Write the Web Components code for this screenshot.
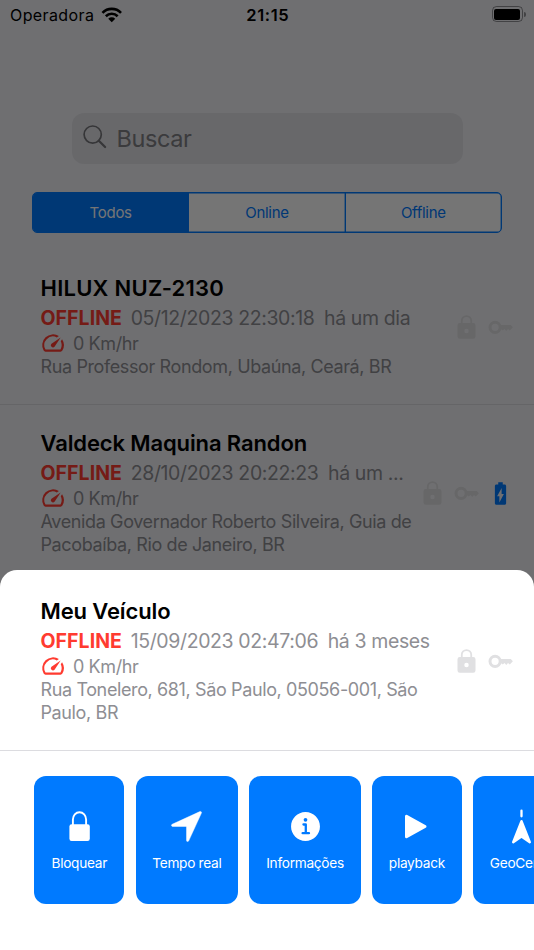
<!DOCTYPE html>
<html lang="pt-BR">
<head>
<meta charset="utf-8">
<meta name="viewport" content="width=device-width, initial-scale=1">
<title>Veículos</title>
<style>
  :root {
    --blue: #007aff;
    --red: #ff3b30;
    --gray: #8e8e93;
    --page: #f2f2f7;
  }

  body {
    margin: 0;
    overflow: hidden;
    font-family: Inter, "Liberation Sans", sans-serif;
    color: #000;
  }
</style>
</head>
<body>
<tracker-app>
  <status-bar carrier="Operadora" time="21:15"></status-bar>
  <search-field placeholder="Buscar"></search-field>
  <segmented-control>
    <segment-item selected>Todos</segment-item>
    <segment-item>Online</segment-item>
    <segment-item>Offline</segment-item>
  </segmented-control>
  <vehicle-row name="HILUX NUZ-2130" status="OFFLINE" date="05/12/2023 22:30:18" ago="há um dia" speed="0 Km/hr" icons="lock key" style="--name-tracking: 0.25px">
    <span>Rua Professor Rondom, Ubaúna, Ceará, BR</span>
  </vehicle-row>
  <vehicle-row name="Valdeck Maquina Randon" status="OFFLINE" date="28/10/2023 20:22:23" ago="há um ..." speed="0 Km/hr" icons="lock key battery">
    <span>Avenida Governador Roberto Silveira, Guia de<br>Pacobaíba, Rio de Janeiro, BR</span>
  </vehicle-row>

  <action-sheet slot="sheet">
    <vehicle-row slot="header" name="Meu Veículo" status="OFFLINE" date="15/09/2023 02:47:06" ago="há 3 meses" speed="0 Km/hr" icons="lock key">
      <span>Rua Tonelero, 681, São Paulo, 05056-001, São<br>Paulo, BR</span>
    </vehicle-row>
    <action-tile icon="padlock" style="width: 90px">Bloquear</action-tile>
    <action-tile icon="navigate" style="width: 102.7px">Tempo real</action-tile>
    <action-tile icon="info" style="width: 111.3px">Informações</action-tile>
    <action-tile icon="play" style="width: 90px">playback</action-tile>
    <action-tile icon="fence" style="width: 96px">GeoCerca</action-tile>
  </action-sheet>
</tracker-app>

<script>
const ICONS = {
  lock: {
    box: '0 0 24 24',
    body: '<path d="M12 17a2 2 0 0 0 2-2 2 2 0 0 0-4 0 2 2 0 0 0 2 2M18 8a2 2 0 0 1 2 2v10a2 2 0 0 1-2 2H6a2 2 0 0 1-2-2V10a2 2 0 0 1 2-2h1V6a5 5 0 0 1 10 0v2h1M12 2.6A3.4 3.4 0 0 0 8.6 6v2h6.8V6A3.4 3.4 0 0 0 12 2.6Z"/>',
  },
  key: {
    box: '0 0 27 27',
    body: '<circle cx="8.1" cy="13.3" r="5.1" fill="none" stroke="currentColor" stroke-width="3"/><path d="M13 11h10.8l2.1 2.3-3.1 3.1-1.8-1.4-1.7 1.9-1.8-1.9-1.7 1.5-1-1H13Z"/>',
  },
  battery: {
    box: '0 0 24 24',
    body: '<path d="M15.67 4H14V2h-4v2H8.33C7.6 4 7 4.6 7 5.33v15.33C7 21.4 7.6 22 8.33 22h7.33c.74 0 1.34-.6 1.34-1.33V5.33C17 4.6 16.4 4 15.67 4zM11 20v-5.5H9L13 7v5.5h2L11 20z"/>',
  },
  gauge: {
    box: '0 0 24 24',
    body: '<path d="m20.38 8.57-1.23 1.85a8 8 0 0 1-.22 7.58H5.07A8 8 0 0 1 15.58 6.85l1.85-1.23A10 10 0 0 0 3.35 19a2 2 0 0 0 1.72 1h13.85a2 2 0 0 0 1.74-1 10 10 0 0 0-.27-10.44zM10.59 15.41a2 2 0 0 0 2.83 0l5.66-8.49-8.49 5.66a2 2 0 0 0 0 2.83z"/>',
  },
  search: {
    box: '0 0 24 24',
    body: '<g fill="none" stroke="currentColor"><circle cx="9.7" cy="9.6" r="8.6" stroke-width="1.7"/><path d="m15.8 15.8 6.3 6.2" stroke-width="2.3" stroke-linecap="round"/></g>',
  },
  wifi: {
    box: '0 0 22 16',
    body: '<g fill="none" stroke="currentColor" stroke-width="2.7"><path d="M1.4 6a13.5 13.5 0 0 1 19.2 0"/><path d="M4.9 9.5a8.6 8.6 0 0 1 12.2 0"/></g><path d="m7.4 12.1a5.2 5.2 0 0 1 7.2 0L11 15.7Z"/>',
  },
  padlock: {
    box: '0 0 37 37',
    body: '<rect x="8.4" y="16.3" width="20.4" height="16.7" rx="2.2"/><path d="M11.9 17v-5.4a6.6 7.4 0 0 1 13.2 0V17" fill="none" stroke="currentColor" stroke-width="1.9"/>',
  },
  navigate: {
    box: '0 0 512 512',
    body: '<path d="M272 464a16 16 0 0 1-16-16.42V264.13a8 8 0 0 0-8-8H64.41a16.31 16.31 0 0 1-15.49-10.65 16 16 0 0 1 8.41-19.87l384-176.15a16 16 0 0 1 21.22 21.19l-176 384A16 16 0 0 1 272 464z" stroke="currentColor" stroke-width="6"/>',
  },
  info: {
    box: '0 0 512 512',
    body: '<path d="M256 56C145.72 56 56 145.72 56 256s89.72 200 200 200 200-89.72 200-200S366.28 56 256 56zm0 82a26 26 0 1 1-26 26 26 26 0 0 1 26-26zm48 226h-88a16 16 0 0 1 0-32h28v-88h-16a16 16 0 0 1 0-32h32a16 16 0 0 1 16 16v104h28a16 16 0 0 1 0 32z"/>',
  },
  play: {
    box: '0 0 37 37',
    body: '<path d="M8.5 8.2v20.6L27 18.5Z" stroke="currentColor" stroke-width="3" stroke-linejoin="round"/>',
  },
  fence: {
    box: '0 0 37 37',
    body: '<path d="M18.5 2.7v5.6" fill="none" stroke="currentColor" stroke-width="2.3" stroke-linecap="round"/><path d="m18.5 13.2 8.3 21-8.3-5.6-8.3 5.6Z" stroke="currentColor" stroke-width="2.4" stroke-linejoin="round"/>',
  },
}

const attach = (element, html) => {
  const root = element.attachShadow({ mode: 'open' })
  root.innerHTML = html
  return root
}

class UiIcon extends HTMLElement {
  connectedCallback() {
    if (this.shadowRoot) {
      return
    }

    const icon = ICONS[this.getAttribute('name')]
    attach(this, `
      <style>
        :host { display: block; flex: none; width: 27px; height: 27px; }
        svg { display: block; width: 100%; height: 100%; overflow: visible; fill: currentColor; }
      </style>
      <svg viewBox="${icon.box}" aria-hidden="true">${icon.body}</svg>
    `)
  }
}

class TrackerApp extends HTMLElement {
  constructor() {
    super()
    attach(this, `
      <style>
        :host {
          display: block;
          position: relative;
          width: 534px;
          height: 950px;
          overflow: hidden;
          background: var(--page);
        }

        .content { display: flex; flex-direction: column; }

        .dim {
          position: absolute;
          inset: 0;
          background: rgba(0, 0, 0, 0.54);
        }

        .sheet {
          position: absolute;
          left: 0;
          right: 0;
          bottom: 0;
        }
      </style>
      <div class="content"><slot></slot></div>
      <div class="dim"></div>
      <div class="sheet"><slot name="sheet"></slot></div>
    `)
  }
}

class StatusBar extends HTMLElement {
  connectedCallback() {
    attach(this, `
      <style>
        :host {
          display: grid;
          grid-template-columns: 1fr auto 1fr;
          align-items: center;
          height: 29px;
          padding: 0 8.5px 0 10px;
          font-size: 16px;
        }

        .carrier { display: flex; align-items: center; gap: 7px; letter-spacing: 0.4px; }
        .carrier ui-icon { width: 21.5px; height: 15.5px; }
        .time { font-size: 16.5px; font-weight: 600; letter-spacing: 0.6px; }
        .power { display: flex; align-items: center; justify-content: flex-end; gap: 1.5px; margin-top: -1px; }

        .shell {
          box-sizing: border-box;
          width: 31px;
          height: 16px;
          padding: 1.5px;
          border: 1px solid rgba(0, 0, 0, 0.4);
          border-radius: 4.5px;
        }

        .level { height: 100%; border-radius: 2px; background: #000; }
        .tip { width: 1.5px; height: 5px; border-radius: 0 2px 2px 0; background: rgba(0, 0, 0, 0.4); }
      </style>
      <div class="carrier"><span>${this.getAttribute('carrier')}</span><ui-icon name="wifi"></ui-icon></div>
      <div class="time">${this.getAttribute('time')}</div>
      <div class="power"><div class="shell"><div class="level"></div></div><div class="tip"></div></div>
    `)
  }
}

class SearchField extends HTMLElement {
  connectedCallback() {
    attach(this, `
      <style>
        :host {
          display: flex;
          align-items: center;
          gap: 10px;
          box-sizing: border-box;
          height: 51px;
          margin: 84px 71.5px 0 71.5px;
          padding: 0 11px;
          border-radius: 12px;
          background: #e3e3e8;
          color: #808085;
          font-size: 23.5px;
          letter-spacing: -0.4px;
        }

        ui-icon { width: 24px; height: 24px; margin-top: -3px; color: #77777b; }
      </style>
      <ui-icon name="search"></ui-icon>
      <span>${this.getAttribute('placeholder')}</span>
    `)
  }
}

class SegmentedControl extends HTMLElement {
  constructor() {
    super()
    attach(this, `
      <style>
        :host {
          display: flex;
          box-sizing: border-box;
          height: 41px;
          margin: 28px 32px 17px;
          overflow: hidden;
          border: 1px solid var(--blue);
          border-radius: 5px;
          background: #fff;
          box-shadow: inset 0 0 0 0.4px var(--blue);
        }

        ::slotted(:not(:first-child)) {
          border-left: 1px solid var(--blue);
          box-shadow: -0.4px 0 0 var(--blue);
        }
      </style>
      <slot></slot>
    `)
  }
}

class SegmentItem extends HTMLElement {
  constructor() {
    super()
    attach(this, `
      <style>
        :host {
          display: flex;
          flex: 1 1 0;
          align-items: center;
          justify-content: center;
          padding-bottom: 1px;
          color: var(--blue);
          font-size: 15px;
          letter-spacing: -0.3px;
        }

        :host([selected]) { background: var(--blue); color: #fff; }
      </style>
      <slot></slot>
    `)
  }
}

class VehicleRow extends HTMLElement {
  connectedCallback() {
    const icons = this.getAttribute('icons').split(' ')
      .map((name) => `<ui-icon class="${name}" name="${name}"></ui-icon>`)
      .join('')

    attach(this, `
      <style>
        :host {
          display: flex;
          align-items: center;
          box-sizing: border-box;
          padding: 23px 20.5px 26px 40.5px;
          border-bottom: 1px solid #dcdce0;
          color: var(--gray);
          white-space: nowrap;
        }

        .info { flex: 1; min-width: 0; }
        .name {
          color: #000;
          font-size: 22px;
          font-weight: 600;
          line-height: 30px;
          letter-spacing: var(--name-tracking, -0.12px);
        }
        .state {
          display: flex;
          gap: 9.5px;
          padding-top: 1px;
          font-size: 19.5px;
          line-height: 28px;
          letter-spacing: -0.38px;
        }
        .status { color: var(--red); font-weight: 700; letter-spacing: 0.05px; }
        .date { margin-left: -0.8px; }
        .speed { display: flex; align-items: center; gap: 7px; height: 22px; font-size: 18px; letter-spacing: -0.4px; }
        .speed ui-icon { width: 26px; height: 26px; margin-left: -0.5px; color: var(--red); }
        .address { padding-top: 1px; font-size: 18px; line-height: 23px; letter-spacing: -0.38px; }
        .icons { display: flex; gap: 7px; padding-top: 3px; color: #e0e0e2; }
        .battery { color: var(--blue); }
      </style>
      <div class="info">
        <div class="name">${this.getAttribute('name')}</div>
        <div class="state">
          <span class="status">${this.getAttribute('status')}</span>
          <span class="date">${this.getAttribute('date')}</span>
          <span class="ago">${this.getAttribute('ago')}</span>
        </div>
        <div class="speed"><ui-icon name="gauge"></ui-icon><span>${this.getAttribute('speed')}</span></div>
        <div class="address"><slot></slot></div>
      </div>
      <div class="icons">${icons}</div>
    `)
  }
}

class ActionSheet extends HTMLElement {
  constructor() {
    super()
    attach(this, `
      <style>
        :host {
          display: block;
          box-sizing: border-box;
          height: 380px;
          padding-top: 3px;
          border-radius: 17px 17px 0 0;
          background: #fff;
        }

        .actions { display: flex; gap: 11.4px; padding: 25.3px 0 0 34.3px; overflow: hidden; }
      </style>
      <slot name="header"></slot>
      <div class="actions"><slot></slot></div>
    `)
  }
}

class ActionTile extends HTMLElement {
  connectedCallback() {
    attach(this, `
      <style>
        :host {
          display: flex;
          flex: none;
          flex-direction: column;
          align-items: center;
          box-sizing: border-box;
          height: 128.2px;
          margin-right: -0.2px;
          padding-top: 31.5px;
          border-radius: 12px;
          background: var(--blue);
          color: #fff;
          font-size: 13.7px;
          letter-spacing: -0.3px;
        }

        ui-icon { width: 37px; height: 37px; }
        .label { margin-top: 8px; line-height: 20px; white-space: nowrap; }
      </style>
      <ui-icon name="${this.getAttribute('icon')}"></ui-icon>
      <span class="label"><slot></slot></span>
    `)
  }
}

customElements.define('ui-icon', UiIcon)
customElements.define('tracker-app', TrackerApp)
customElements.define('status-bar', StatusBar)
customElements.define('search-field', SearchField)
customElements.define('segmented-control', SegmentedControl)
customElements.define('segment-item', SegmentItem)
customElements.define('vehicle-row', VehicleRow)
customElements.define('action-sheet', ActionSheet)
customElements.define('action-tile', ActionTile)
</script>
</body>
</html>
